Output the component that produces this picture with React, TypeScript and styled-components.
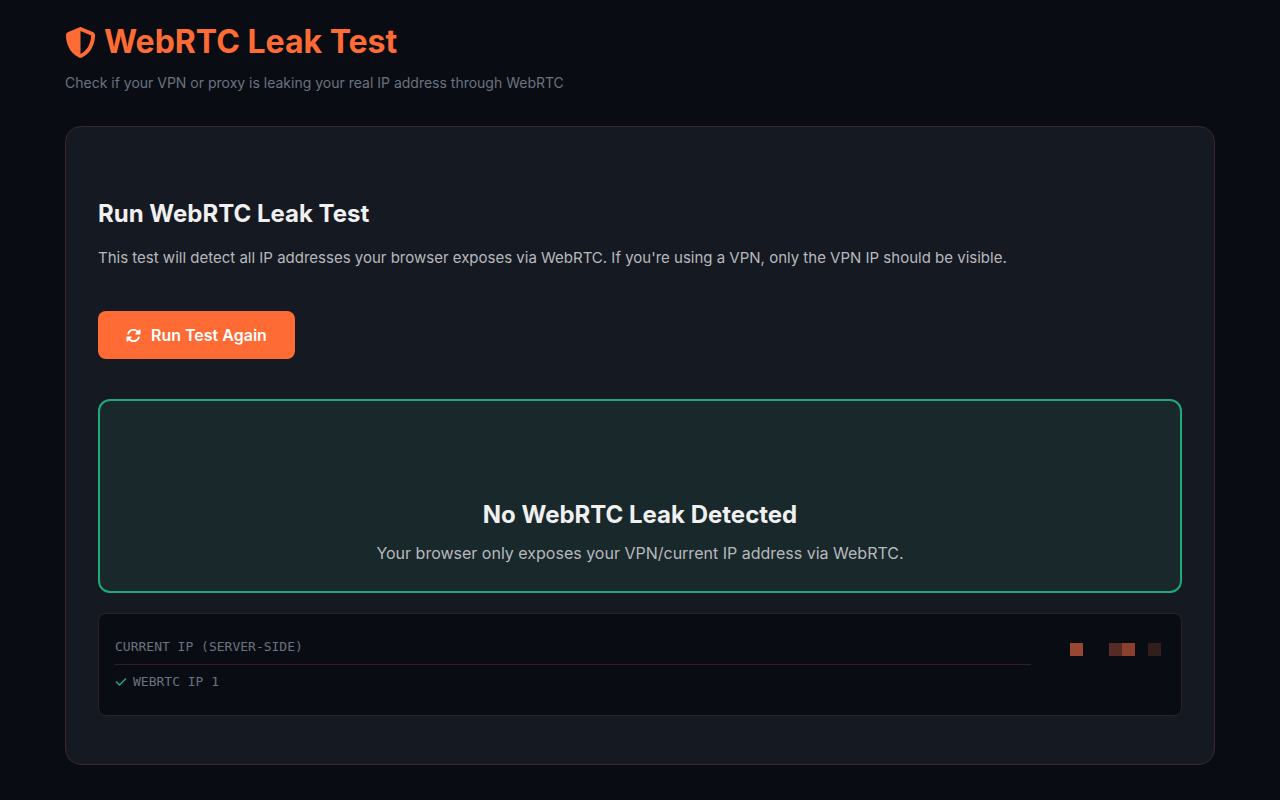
import React from "react";
import styled, { createGlobalStyle } from "styled-components";
import { FaShieldHalved, FaRotate, FaCheck } from "react-icons/fa6";

const GlobalStyle = createGlobalStyle`
  * { box-sizing: border-box; }
  body {
    margin: 0;
    min-height: 100vh;
    background: #090d13;
    color: #f0f0f0;
    font-family: Inter, "Liberation Sans", sans-serif;
  }
  h1, h2, h3, p { margin: 0; }
`;

const Page = styled.main`
  padding: 20px 65px 35px;
`;

const Title = styled.h1`
  display: flex;
  align-items: center;
  gap: 8px;
  color: #ff6b35;
  font-size: 32px;
  line-height: 44px;
  font-weight: 700;
`;

const Subtitle = styled.p`
  margin-top: 8px;
  color: #6b7280;
  font-size: 14px;
  line-height: 22px;
`;

const Card = styled.section`
  margin-top: 32px;
  padding: 69px 32px 48px;
  background: #151922;
  border: 1px solid #38282b;
  border-radius: 16px;
`;

const Heading = styled.h2`
  font-size: 24px;
  line-height: 36px;
  font-weight: 700;
`;

const Text = styled.p`
  margin-top: 14px;
  color: #b8b9bc;
  font-size: 15px;
  line-height: 24px;
`;

const RunButton = styled.button`
  display: flex;
  align-items: center;
  gap: 10px;
  height: 48px;
  margin-top: 41px;
  padding: 0 28px;
  border: 0;
  border-radius: 8px;
  background: #ff6b35;
  color: #fff;
  font-family: inherit;
  font-size: 16px;
  font-weight: 600;
  cursor: pointer;
`;

const Result = styled.section`
  margin-top: 40px;
  padding: 96px 24px 25px;
  border: 2px solid #1fa979;
  border-radius: 12px;
  background: #19282b;
  text-align: center;
`;

const ResultText = styled.p`
  margin-top: 8px;
  color: #b8b9bc;
  font-size: 16px;
  line-height: 25px;
`;

const IpPanel = styled.section`
  display: grid;
  grid-template-columns: 1fr 91px;
  column-gap: 39px;
  align-items: start;
  margin-top: 20px;
  padding: 16px 20px 16px 16px;
  border: 1px solid #302021;
  border-radius: 8px;
  background: #090d13;
`;

const IpLabels = styled.div`
  color: #6b7280;
  font-family: "DejaVu Sans Mono", monospace;
  font-size: 13px;
  line-height: 34px;
`;

const IpRow = styled.div`
  display: flex;
  align-items: center;
  gap: 6px;

  & + & {
    border-top: 1px solid #302021;
  }
`;

const Mosaic = styled.div`
  display: grid;
  grid-template-columns: repeat(7, 13px);
  margin-top: 13px;
`;

const Tile = styled.span<{ $color: string }>`
  height: 13px;
  background: ${({ $color }) => $color};
`;

const tiles = [
  "#984730",
  "transparent",
  "transparent",
  "#562b25",
  "#8a402c",
  "transparent",
  "#321f1d",
];

export default function App() {
  return (
    <>
      <GlobalStyle />
      <Page>
        <header>
          <Title>
            <FaShieldHalved size={31} aria-hidden />
            WebRTC Leak Test
          </Title>
          <Subtitle>
            Check if your VPN or proxy is leaking your real IP address through WebRTC
          </Subtitle>
        </header>
        <Card>
          <Heading>Run WebRTC Leak Test</Heading>
          <Text>
            This test will detect all IP addresses your browser exposes via WebRTC. If you're
            using a VPN, only the VPN IP should be visible.
          </Text>
          <RunButton type="button">
            <FaRotate size={15} aria-hidden />
            Run Test Again
          </RunButton>
          <Result>
            <Heading as="h3">No WebRTC Leak Detected</Heading>
            <ResultText>
              Your browser only exposes your VPN/current IP address via WebRTC.
            </ResultText>
          </Result>
          <IpPanel>
            <IpLabels>
              <IpRow>CURRENT IP (SERVER-SIDE)</IpRow>
              <IpRow>
                <FaCheck size={12} color="#1fa979" aria-hidden />
                WEBRTC IP 1
              </IpRow>
            </IpLabels>
            <Mosaic aria-hidden>
              {tiles.map((color, i) => (
                <Tile key={i} $color={color} />
              ))}
            </Mosaic>
          </IpPanel>
        </Card>
      </Page>
    </>
  );
}
